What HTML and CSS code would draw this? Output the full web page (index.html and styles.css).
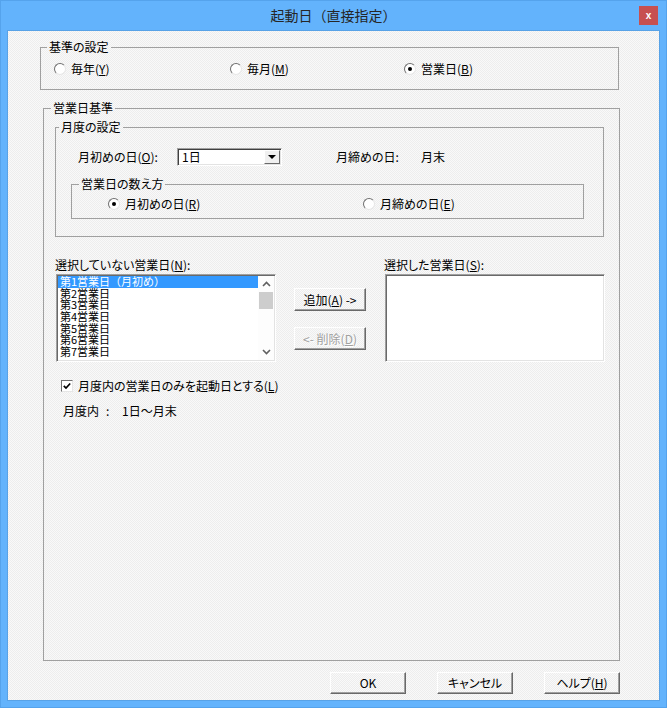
FILE: index.html
```html
<!DOCTYPE html>
<html lang="ja">
<head>
  <meta charset="utf-8">
  <meta name="viewport" content="width=device-width, initial-scale=1">
  <link rel="stylesheet" href="styles.css">
  <title>起動日（直接指定）</title>
</head>
<body>

<div class="window">
  <!-- Title Bar -->
  <div class="titlebar">
    <span class="title">起動日（直接指定）</span>
    <span class="close">x</span>
  </div>

  <div class="client">
    <!-- 基準の設定 -->
    <fieldset class="group group-base">
      <legend>基準の設定</legend>
      <div class="base-row">
        <label class="radio"><span class="dot"></span><span>毎年(<u>Y</u>)</span></label>
        <label class="radio"><span class="dot"></span><span>毎月(<u>M</u>)</span></label>
        <label class="radio checked"><span class="dot"></span><span>営業日(<u>B</u>)</span></label>
      </div>
    </fieldset>

    <!-- 営業日基準 -->
    <fieldset class="group group-biz">
      <legend>営業日基準</legend>

      <!-- 月度の設定 -->
      <fieldset class="group group-month">
        <legend>月度の設定</legend>
        <div class="month-row">
          <span class="month-label">月初めの日(<u>O</u>):</span>
          <div class="combo">
            <span class="combo-value">1日</span>
            <span class="combo-btn"><span class="arrow-down"></span></span>
          </div>
          <span class="month-end-label">月締めの日:</span>
          <span>月末</span>
        </div>

        <!-- 営業日の数え方 -->
        <fieldset class="group group-count">
          <legend>営業日の数え方</legend>
          <div class="count-row">
            <label class="radio checked"><span class="dot"></span><span>月初めの日(<u>R</u>)</span></label>
            <label class="radio"><span class="dot"></span><span>月締めの日(<u>E</u>)</span></label>
          </div>
        </fieldset>
      </fieldset>

      <!-- 営業日リスト -->
      <div class="lists">
        <div class="list-col">
          <span class="list-label">選択していない営業日(<u>N</u>):</span>
          <div class="listbox">
            <ul class="items">
              <li class="selected">第1営業日（月初め）</li>
              <li>第2営業日</li>
              <li>第3営業日</li>
              <li>第4営業日</li>
              <li>第5営業日</li>
              <li>第6営業日</li>
              <li>第7営業日</li>
            </ul>
            <div class="scrollbar">
              <span class="sb-arrow">
                <svg width="9" height="6" viewBox="0 0 9 6"><polyline points="1,5 4.5,1.5 8,5" fill="none" stroke="#606060" stroke-width="1.6"/></svg>
              </span>
              <span class="sb-thumb"></span>
              <span class="sb-track"></span>
              <span class="sb-arrow">
                <svg width="9" height="6" viewBox="0 0 9 6"><polyline points="1,1 4.5,4.5 8,1" fill="none" stroke="#606060" stroke-width="1.6"/></svg>
              </span>
            </div>
          </div>
        </div>

        <div class="list-buttons">
          <span class="btn"><span>追加(<u>A</u>) -&gt;</span></span>
          <span class="btn disabled"><span>&lt;- 削除(<u>D</u>)</span></span>
        </div>

        <div class="list-col">
          <span class="list-label">選択した営業日(<u>S</u>):</span>
          <div class="listbox"></div>
        </div>
      </div>

      <!-- 月度内のみ -->
      <label class="check-row">
        <span class="checkbox">
          <svg width="8" height="8" viewBox="0 0 8 8"><polyline points="0.8,3.8 3,6 7.2,1.5" fill="none" stroke="#000" stroke-width="1.7"/></svg>
        </span>
        <span>月度内の営業日のみを起動日とする(<u>L</u>)</span>
      </label>
      <div class="range-row">
        <span class="range-label">月度内</span>
        <span class="range-colon">:</span>
        <span>1日～月末</span>
      </div>
    </fieldset>

    <!-- Dialog Buttons -->
    <div class="footer">
      <span class="btn btn-dialog">OK</span>
      <span class="btn btn-dialog">キャンセル</span>
      <span class="btn btn-dialog"><span>ヘルプ(<u>H</u>)</span></span>
    </div>
  </div>
</div>

</body>
</html>
```

FILE: styles.css
```css
* {
  box-sizing: border-box;
}
body {
  margin: 0;
  font-family: "Noto Sans CJK JP", "Noto Sans", sans-serif;
  font-size: 12px;
  line-height: 14px;
  color: #000;
  font-feature-settings: "palt";
}
u {
  text-underline-offset: 1px;
}
.window {
  width: 667px;
  height: 708px;
  background-color: #63b3fc;
  border: 1px solid #55a3ec;
  padding: 0 6px 6px 6px;
  display: flex;
  flex-direction: column;
}
.titlebar {
  height: 29px;
  display: grid;
  grid-template-columns: 1fr auto 1fr;
  align-items: center;
}
.title {
  grid-column: 2;
  font-size: 14px;
  color: #262626;
  font-feature-settings: normal;
  margin-top: -2px;
}
.close {
  grid-column: 3;
  justify-self: end;
  width: 19px;
  height: 19px;
  margin-right: 2px;
  background-color: #c75050;
  color: #fff;
  font: bold 10px "Liberation Sans", sans-serif;
  display: flex;
  align-items: center;
  justify-content: center;
}
.client {
  flex: 1;
  border: 1px solid #58a2e6;
  background: repeating-conic-gradient(#ededed 0% 25%, #f9f9f9 0% 50%) 0 0 / 2px 2px;
  display: flex;
  flex-direction: column;
  padding: 9px 0 6px 0;
}

/* group boxes */
.group {
  margin: 0;
  padding: 0;
  border: 1px solid #a0a0a0;
  min-width: 0;
}
.group > legend {
  padding: 0 2px;
  line-height: 14px;
}
.group-base {
  width: 579px;
  margin-left: 32px;
}
.group-base > legend {
  margin-left: 6px;
}
.base-row {
  display: grid;
  grid-template-columns: 176px 174px auto;
  padding: 8px 0 13px 13px;
}
.group-biz {
  width: 577px;
  margin: 11px 0 0 35px;
  flex: 1;
}
.group-biz > legend {
  margin-left: 7px;
}
.group-month {
  margin: 5px 15px 0 11px;
  padding-bottom: 17px;
}
.group-month > legend {
  margin-left: 3px;
}
.month-row {
  display: flex;
  align-items: center;
  padding: 14px 0 0 22px;
}
.month-label {
  width: 99px;
}
.month-end-label {
  width: 85px;
  margin-left: 54px;
}
.group-count {
  margin: 11px 19px 0 15px;
}
.group-count > legend {
  margin-left: 7px;
}
.count-row {
  display: grid;
  grid-template-columns: 255px auto;
  padding: 6px 0 7px 36px;
}

/* radio & checkbox */
.radio {
  display: flex;
  align-items: center;
  gap: 5px;
}
.radio .dot {
  width: 12px;
  height: 12px;
  border-radius: 50%;
  background-color: #fff;
  border: 1px solid;
  border-color: #6f6f6f #e6e6e6 #e6e6e6 #6f6f6f;
  position: relative;
}
.radio.checked .dot::after {
  content: "";
  position: absolute;
  left: 3px;
  top: 3px;
  width: 4px;
  height: 4px;
  border-radius: 50%;
  background-color: #000;
}
.check-row {
  display: flex;
  align-items: center;
  gap: 5px;
  margin: 17px 0 0 17px;
}
.checkbox {
  width: 12px;
  height: 12px;
  background-color: #fff;
  border: 1px solid;
  border-color: #6f6f6f #e6e6e6 #e6e6e6 #6f6f6f;
  display: flex;
  align-items: center;
  justify-content: center;
}
.range-row {
  display: flex;
  margin: 11px 0 0 19px;
}
.range-label {
  width: 43px;
}
.range-colon {
  width: 16px;
}

/* combo */
.combo {
  width: 105px;
  height: 18px;
  display: flex;
  background-color: #fff;
  border: 1px solid;
  border-color: #a0a0a0 #fff #fff #a0a0a0;
  box-shadow: inset 1px 1px #404040, inset -1px -1px #e3e3e3;
  padding: 1px;
}
.combo-value {
  flex: 1;
  padding-left: 3px;
  line-height: 14px;
}
.combo-btn {
  width: 16px;
  background-color: #f0f0f0;
  border: 1px solid;
  border-color: #fff #696969 #696969 #fff;
  display: flex;
  align-items: center;
  justify-content: center;
}
.arrow-down {
  width: 0;
  height: 0;
  border-left: 4px solid transparent;
  border-right: 4px solid transparent;
  border-top: 4px solid #000;
}

/* lists */
.lists {
  display: flex;
  margin: 21px 0 0 11px;
}
.list-label {
  display: block;
  margin-bottom: 2px;
}
.listbox {
  width: 220px;
  height: 88px;
  margin-left: 1px;
  background-color: #fff;
  border: 1px solid;
  border-color: #a0a0a0 #fff #fff #a0a0a0;
  box-shadow: inset 1px 1px #696969, inset -1px -1px #e3e3e3;
  padding: 1px;
  display: flex;
}
.items {
  flex: 1;
  list-style: none;
  margin: 0;
  padding: 0;
  overflow: hidden;
  font-size: 11px;
  line-height: 11.7px;
  font-feature-settings: normal;
}
.items li {
  height: 11.7px;
  padding-left: 2px;
  white-space: nowrap;
}
.items li.selected {
  background-color: #3399ff;
  color: #fff;
}
.scrollbar {
  width: 16px;
  background-color: #fdfdfd;
  display: flex;
  flex-direction: column;
}
.sb-arrow {
  height: 16px;
  display: flex;
  align-items: center;
  justify-content: center;
}
.sb-thumb {
  height: 17px;
  margin: 0 1px;
  background-color: #cdcdcd;
}
.sb-track {
  flex: 1;
}
.list-buttons {
  display: flex;
  flex-direction: column;
  gap: 16px;
  margin: 30px 18px 0 18px;
}

/* buttons */
.btn {
  width: 72px;
  height: 23px;
  border: 1px solid;
  border-color: #fff #696969 #696969 #fff;
  box-shadow: inset -1px -1px #a0a0a0;
  background: repeating-conic-gradient(#ededed 0% 25%, #f9f9f9 0% 50%) 0 0 / 2px 2px;
  display: flex;
  align-items: center;
  justify-content: center;
}
.btn.disabled {
  color: #a0a0a0;
  text-shadow: 1px 1px #fff;
}
.footer {
  display: flex;
  justify-content: flex-end;
  gap: 31px;
  padding-right: 39px;
  margin-top: 11px;
}
.btn-dialog {
  width: 76px;
  height: 22px;
}
```
